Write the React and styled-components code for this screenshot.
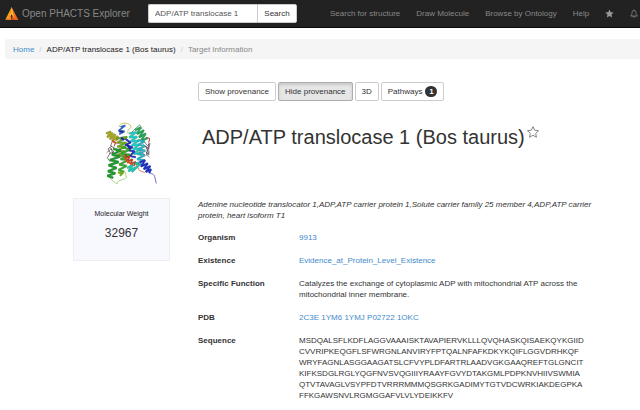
import React from "react";
import styled, { createGlobalStyle, css } from "styled-components";

const GlobalStyle = createGlobalStyle`
  * { box-sizing: border-box; }
  body {
    margin: 0;
    overflow-x: hidden;
    background: #fff;
    color: #333;
    font-family: "Liberation Sans", Arial, sans-serif;
    font-size: 8px;
    line-height: 11px;
  }
`;

const Navbar = styled.header`
  display: flex;
  align-items: center;
  height: 28px;
  padding-left: 5px;
  overflow: hidden;
  background: #222;
  border-bottom: 1px solid #080808;
  white-space: nowrap;
`;

const Brand = styled.a`
  display: flex;
  align-items: center;
  gap: 3px;
  width: 143px;
  flex: none;
  color: #888;
  font-size: 10px;
  text-decoration: none;
`;

const SearchForm = styled.form`
  display: flex;
  flex: none;
  height: 19px;
  margin-right: 33px;
`;

const SearchInput = styled.input`
  width: 109px;
  padding: 0 6px;
  border: 1px solid #ccc;
  border-right: 0;
  border-radius: 2px 0 0 2px;
  background: #fff;
  color: #555;
  font: inherit;
`;

const SearchButton = styled.button`
  width: 40px;
  padding: 0;
  border: 1px solid #ccc;
  border-radius: 0 2px 2px 0;
  background: #fff;
  color: #333;
  font: inherit;
`;

const NavLinks = styled.nav`
  display: flex;
  align-items: center;
  gap: 16px;
`;

const NavLink = styled.a`
  display: flex;
  color: #888;
  text-decoration: none;
`;

const Breadcrumb = styled.ol`
  display: flex;
  align-items: center;
  height: 20px;
  margin: 11px 0 0 5px;
  padding: 0 8px;
  border-radius: 2px 0 0 2px;
  background: #f5f5f5;
  list-style: none;
`;

const Crumb = styled.li`
  color: ${(p) => (p.$current ? "#888" : "#222")};

  &:not(:first-child)::before {
    content: "/";
    padding: 0 5px;
    color: #ccc;
  }
`;

const Link = styled.a`
  color: #428bca;
  text-decoration: none;
`;

const Main = styled.main`
  display: grid;
  grid-template-columns: 97px minmax(0, 1fr);
  column-gap: 28px;
  padding: 23px 40px 8px 73px;
`;

const Sidebar = styled.aside`
  padding-top: 38px;
`;

const Structure = styled.svg`
  display: block;
  width: 53px;
  height: 67px;
  margin: 0 auto 11px 32px;
`;

const WeightCard = styled.section`
  height: 63px;
  padding-top: 9px;
  border: 1px solid #eee;
  background: #f8f8ff;
  text-align: center;
`;

const WeightLabel = styled.div`
  color: #222;
  font-size: 7px;
`;

const WeightValue = styled.div`
  margin-top: 6px;
  font-size: 12px;
  line-height: 16px;
`;

const Toolbar = styled.div`
  display: flex;
  gap: 2px;
`;

const ToolButton = styled.button`
  display: flex;
  align-items: center;
  gap: 3px;
  height: 19px;
  padding: 0 6px;
  border: 1px solid #ccc;
  border-radius: 2px;
  background: #fff;
  color: #333;
  font: inherit;

  ${(p) =>
    p.$active &&
    css`
      border-color: #adadad;
      background: #e6e6e6;
      box-shadow: inset 0 2px 3px rgba(0, 0, 0, 0.13);
    `}
`;

const Badge = styled.span`
  min-width: 12px;
  padding: 0 3px;
  border-radius: 6px;
  background: #333;
  color: #fff;
  font-weight: bold;
`;

const Title = styled.h1`
  display: flex;
  margin: 23px 0 49px;
  padding-left: 4px;
  color: #333;
  font-size: 20px;
  font-weight: normal;
  line-height: 26px;
  white-space: nowrap;
`;

const StarButton = styled.button`
  display: flex;
  align-self: flex-start;
  margin: 2px 0 0 2px;
  padding: 0;
  border: 0;
  background: none;
`;

const Synonyms = styled.p`
  margin: 0 0 11px;
  font-style: italic;
`;

const Details = styled.dl`
  display: grid;
  grid-template-columns: 101px minmax(0, 1fr);
  row-gap: 12px;
  margin: 0;
`;

const Term = styled.dt`
  font-weight: bold;
`;

const Value = styled.dd`
  margin: 0;
`;

const SequenceLine = styled.span`
  display: block;
  white-space: nowrap;
`;

const STAR = "M8 0.800l2.200 4.800 5.200.7-3.800 3.500 1 5.200L8 12.400l-4.600 2.600 1-5.200L.6 6.300l5.200-.7z";

const StarIcon = ({ size, filled }) => (
  <svg width={size} height={size} viewBox="0 0 16 16" aria-hidden="true">
    <path d={STAR} fill={filled ? "#999" : "none"} stroke={filled ? "none" : "#777"} strokeWidth="1.2" />
  </svg>
);

const BellIcon = () => (
  <svg width="8" height="9" viewBox="0 0 16 18" fill="none" stroke="#888" strokeWidth="1.6" aria-hidden="true">
    <path d="M8 1v2M1 14c2.5-2 3-4 3-7a4 4 0 0 1 8 0c0 3 .5 5 3 7zM6 14.5a2 2 0 0 0 4 0" />
  </svg>
);

const Logo = () => (
  <svg width="14" height="14" viewBox="0 0 42 42" aria-hidden="true">
    <path d="M20 0L1 38q8-1 13-7z" fill="#f9a51a" />
    <path d="M20 0l-7 31 7-10 4 17 16 1z" fill="#ef6c23" />
    <path d="M20 0l5 21 3 17-8-16-7 10z" fill="#fbb829" />
    <path d="M1 38l17-12 1 13z" fill="#f58a1f" />
    <path d="M22 24l-3 15h10z" fill="#d94d20" />
  </svg>
);

/* Each helix is a ribbon folded back and forth between two edges. */
const HELICES = [
  { color: "#a3a31c", width: 5, points: "48,70 62,64 52,82 68,68 60,88 76,72 68,92 84,78 78,92" },
  { color: "#2f62cc", width: 4, points: "92,50 106,46 86,62 104,64 88,72" },
  { color: "#21a552", width: 5, points: "136,60 152,52 142,72 162,60 148,82 168,70 154,92 174,84" },
  { color: "#1fc9c4", width: 5, points: "118,70 140,66 118,82 142,80 122,94 146,92 126,106 148,104 130,118 152,116 132,132 154,130" },
  { color: "#22b3c4", width: 5, points: "144,90 164,94 146,104 166,108 146,118 166,122 144,132 164,136 142,148 162,150 140,162 158,164" },
  { color: "#252fc0", width: 5, points: "104,84 122,98 106,104 128,112 112,120 134,124 120,138 138,142" },
  { color: "#6aa51c", width: 5, points: "80,86 112,80 82,98 110,98 82,110 108,110 80,122 106,124 78,138 104,138" },
  { color: "#20992c", width: 6, points: "70,116 92,122 66,134 90,140 60,150 86,156 56,166 80,174 54,184 76,190 52,198 70,204" },
  { color: "#34ab25", width: 5, points: "98,112 120,118 94,132 120,134 92,148 116,150 88,164 110,168 86,180 102,186" },
  { color: "#c43a1c", width: 4, points: "108,132 106,146 120,138 112,154 128,148 122,162 138,156 132,168" },
  { color: "#1ec5ab", width: 5, points: "112,174 130,164 116,184 138,172 126,186 148,166 136,158" },
  { color: "#1f2fc6", width: 5, points: "150,158 166,150 154,170 174,160 162,178 182,168 168,186 184,178 178,190" },
];

const Protein = () => (
  <Structure viewBox="45 30 160 201" fill="none" role="img" aria-label="Protein structure">
    <g stroke="#45343f" strokeWidth="2">
      <path d="M66 108l-12 9 7 12-9 14 8 12M60 112l12 14-14 5M66 96l-4 12 12 6M163 94l10 13 8-7-4 15-9-6 8 20-10 10M160 104l14 10-4 18 9 10M158 112l-8 14 15 8M50 128l14-12 6 20M176 100l2 34-10-8" />
      <path d="M65 92l12 6-5 11M91 90l10-8M168 82l12 3-3 13M150 146l8 11" stroke="#b33932" strokeWidth="3" />
    </g>
    <path d="M88 50c0-16 35-14 36 1-9 7-12 10-9 21" stroke="#bcb645" strokeWidth="2.5" />
    <path d="M122 70l16-16 12-10 7 13" stroke="#42965d" strokeWidth="2.5" />
    <path d="M57 200c10 14 18 19 25 22 0-15 21-9 28-20l-6-20" stroke="#91cf6a" strokeWidth="2.5" />
    <path d="M178 182c2 14 15 6 17 19l5 20" stroke="#5554b8" strokeWidth="2.5" />
    <path d="M139 164l10 18 16 6" stroke="#cf694e" strokeWidth="2.5" />
    {HELICES.map((h) => (
      <g key={h.points} strokeLinejoin="bevel">
        <polyline points={h.points} stroke="#163833" strokeOpacity=".4" strokeWidth={h.width + 2} />
        <polyline points={h.points} stroke={h.color} strokeWidth={h.width} />
      </g>
    ))}
    <path d="M66 92l14 8M104 140l12 20M116 156l12 8" stroke="#d45220" strokeWidth="6" />
    <path d="M94 82l8 8M112 104l10 14M88 64l12 1" stroke="#17269f" strokeWidth="6" />
    <path d="M84 188l14 2-8 8" stroke="#76a719" strokeWidth="6" />
  </Structure>
);

const NAV = ["Search for structure", "Draw Molecule", "Browse by Ontology", "Help"];
const PDB = ["2C3E", "1YM6", "1YMJ", "P02722", "1OKC"];
const SEQUENCE = [
  "MSDQALSFLKDFLAGGVAAAISKTAVAPIERVKLLLQVQHASKQISAEKQYKGIID",
  "CVVRIPKEQGFLSFWRGNLANVIRYFPTQALNFAFKDKYKQIFLGGVDRHKQF",
  "WRYFAGNLASGGAAGATSLCFVYPLDFARTRLAADVGKGAAQREFTGLGNCIT",
  "KIFKSDGLRGLYQGFNVSVQGIIIYRAAYFGVYDTAKGMLPDPKNVHIIVSWMIA",
  "QTVTAVAGLVSYPFDTVRRRMMMQSGRKGADIMYTGTVDCWRKIAKDEGPKA",
  "FFKGAWSNVLRGMGGAFVLVLYDEIKKFV",
];

export default function App() {
  return (
    <>
      <GlobalStyle />
      <Navbar>
        <Brand href="#">
          <Logo />
          Open PHACTS Explorer
        </Brand>
        <SearchForm onSubmit={(e) => e.preventDefault()}>
          <SearchInput aria-label="Search" defaultValue="ADP/ATP translocase 1" />
          <SearchButton type="submit">Search</SearchButton>
        </SearchForm>
        <NavLinks>
          {NAV.map((label) => (
            <NavLink key={label} href="#">{label}</NavLink>
          ))}
          <NavLink href="#" aria-label="Favourites"><StarIcon size={9} filled /></NavLink>
          <NavLink href="#" aria-label="Notifications"><BellIcon /></NavLink>
        </NavLinks>
      </Navbar>
      <Breadcrumb>
        <Crumb><Link href="#">Home</Link></Crumb>
        <Crumb>ADP/ATP translocase 1 (Bos taurus)</Crumb>
        <Crumb $current>Target Information</Crumb>
      </Breadcrumb>
      <Main>
        <Sidebar>
          <Protein />
          <WeightCard>
            <WeightLabel>Molecular Weight</WeightLabel>
            <WeightValue>32967</WeightValue>
          </WeightCard>
        </Sidebar>
        <div>
          <Toolbar>
            <ToolButton>Show provenance</ToolButton>
            <ToolButton $active aria-pressed="true">Hide provenance</ToolButton>
            <ToolButton>3D</ToolButton>
            <ToolButton>Pathways <Badge>1</Badge></ToolButton>
          </Toolbar>
          <Title>
            ADP/ATP translocase 1 (Bos taurus)
            <StarButton aria-label="Add to favourites"><StarIcon size={12} /></StarButton>
          </Title>
          <Synonyms>
            Adenine nucleotide translocator 1,ADP,ATP carrier protein 1,Solute carrier family 25 member 4,ADP,ATP carrier protein, heart isoform T1
          </Synonyms>
          <Details>
            <Term>Organism</Term>
            <Value><Link href="#">9913</Link></Value>
            <Term>Existence</Term>
            <Value><Link href="#">Evidence_at_Protein_Level_Existence</Link></Value>
            <Term>Specific Function</Term>
            <Value>Catalyzes the exchange of cytoplasmic ADP with mitochondrial ATP across the mitochondrial inner membrane.</Value>
            <Term>PDB</Term>
            <Value>
              {PDB.map((id) => (
                <React.Fragment key={id}><Link href="#">{id}</Link> </React.Fragment>
              ))}
            </Value>
            <Term>Sequence</Term>
            <Value>
              {SEQUENCE.map((line) => (
                <SequenceLine key={line}>{line}</SequenceLine>
              ))}
            </Value>
          </Details>
        </div>
      </Main>
    </>
  );
}
